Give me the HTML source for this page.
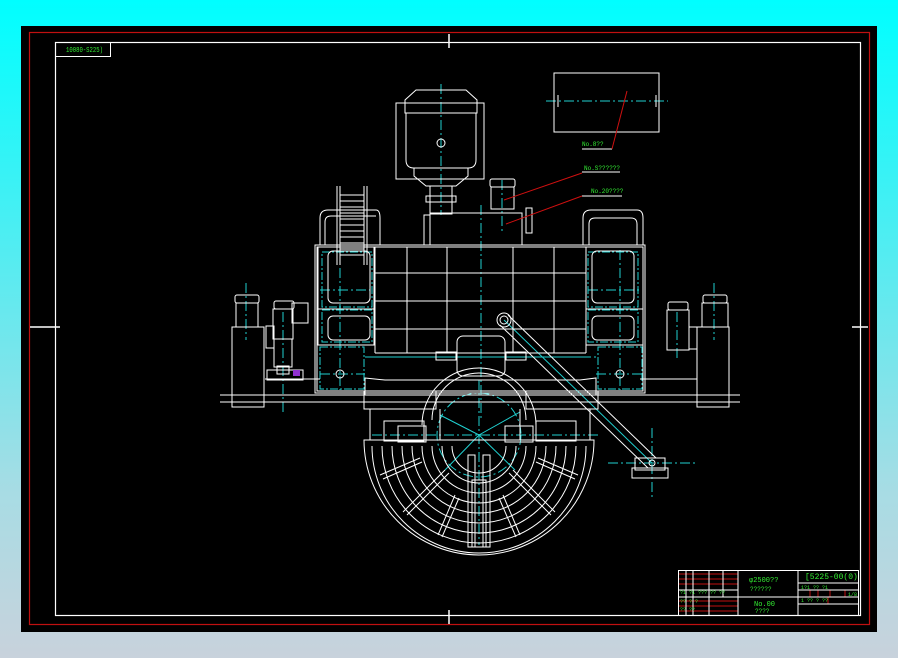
<!DOCTYPE html>
<html><head><meta charset="utf-8"><style>
html,body{margin:0;padding:0;width:898px;height:658px;overflow:hidden;background:linear-gradient(#00ffff 0%,#40f0f4 30%,#a8dce4 75%,#c8d2dc 100%);}
svg{position:absolute;left:0;top:0}
text{font-family:"Liberation Mono",monospace;fill:#33ee33}
</style></head><body>
<svg width="898" height="658" viewBox="0 0 898 658">
<rect x="21" y="26" width="856" height="606" fill="#000"/>
<rect x="29.5" y="32.5" width="840" height="592" fill="none" stroke="#c01010" stroke-width="1.2"/>
<rect x="55.5" y="42.5" width="805" height="573" fill="none" stroke="#fff" stroke-width="1.2"/>
<rect x="55.5" y="42.5" width="55" height="14" fill="none" stroke="#fff"/>
<text x="66" y="52" font-size="7" textLength="37" lengthAdjust="spacingAndGlyphs">10080-S225)</text>
<g stroke="#fff" stroke-width="1.5">
<line x1="449" y1="34" x2="449" y2="48"/><line x1="449" y1="610" x2="449" y2="624"/>
<line x1="30" y1="327" x2="60" y2="327"/><line x1="852" y1="327" x2="868" y2="327"/>
</g>
<g stroke="#20d0d0" stroke-width="1" stroke-dasharray="10,3,2,3" fill="none">
<line x1="441" y1="84" x2="441" y2="215"/>
<line x1="481" y1="205" x2="481" y2="420"/>
<line x1="479" y1="380" x2="479" y2="545"/>
<line x1="502" y1="180" x2="502" y2="232"/>
<line x1="546" y1="101" x2="668" y2="101"/>
<line x1="320" y1="290" x2="370" y2="290"/><line x1="588" y1="290" x2="640" y2="290"/>
<line x1="320" y1="374" x2="365" y2="374"/><line x1="596" y1="374" x2="645" y2="374"/>
<line x1="365" y1="357" x2="596" y2="357"/>
<line x1="246" y1="283" x2="246" y2="340"/><line x1="283" y1="312" x2="283" y2="415"/>
<line x1="714" y1="283" x2="714" y2="340"/><line x1="677" y1="312" x2="677" y2="360"/>
<line x1="372" y1="435" x2="600" y2="435"/>
<line x1="652" y1="428" x2="652" y2="500"/><line x1="608" y1="463" x2="696" y2="463"/>
<line x1="340" y1="250" x2="340" y2="390"/><line x1="620" y1="250" x2="620" y2="390"/>
<circle cx="479" cy="435" r="42"/>
</g>
<g stroke="#20d0d0" stroke-width="1" fill="none">
<rect x="322" y="252" width="50" height="55" stroke-dasharray="8,2,2,2"/>
<rect x="322" y="310" width="50" height="32" stroke-dasharray="8,2,2,2"/>
<rect x="588" y="252" width="50" height="55" stroke-dasharray="8,2,2,2"/>
<rect x="588" y="310" width="50" height="32" stroke-dasharray="8,2,2,2"/>
<rect x="320" y="347" width="44" height="42" stroke-dasharray="8,2,2,2"/>
<rect x="598" y="347" width="44" height="42" stroke-dasharray="8,2,2,2"/>
<line x1="370" y1="357" x2="590" y2="357"/>
<line x1="504" y1="320" x2="652" y2="463"/>
<line x1="479" y1="435" x2="445" y2="470"/><line x1="479" y1="435" x2="515" y2="470"/>
<line x1="479" y1="435" x2="440" y2="415"/><line x1="479" y1="435" x2="520" y2="412"/>
</g>
<g stroke="#fff" stroke-width="1" fill="none">
<rect x="396" y="103" width="88" height="76"/>
<path d="M416 90 H466 L477 100 V113 H405 V100 Z"/>
<path d="M406 113 H476 V160 Q476 168 468 168 H414 Q406 168 406 160 Z"/>
<path d="M414 168 H468 V176 L456 186 H426 L414 176 Z"/>
<rect x="430" y="186" width="22" height="28"/><rect x="426" y="196" width="30" height="6"/>
<circle cx="441" cy="143" r="4"/>
<rect x="430" y="213" width="92" height="32"/><rect x="424" y="215" width="6" height="30"/>
<rect x="490" y="179" width="25" height="8" rx="2"/><rect x="491" y="187" width="23" height="22"/>
<rect x="526" y="208" width="6" height="25"/>
<line x1="337" y1="186" x2="337" y2="265"/><line x1="367" y1="186" x2="367" y2="265"/>
<line x1="340" y1="186" x2="340" y2="265"/><line x1="364" y1="186" x2="364" y2="265"/>
<path d="M340 195H364M340 201H364M340 207H364M340 213H364M340 219H364M340 225H364M340 231H364M340 237H364M340 243H364M340 249H364M340 255H364"/>
<path d="M320 245 V218 Q320 210 328 210 H376 Q380 210 380 218 V245"/>
<path d="M325 245 V222 Q325 216 331 216 H376"/>
<path d="M583 245 V218 Q583 210 591 210 H637 Q643 210 643 218 V245"/>
<path d="M589 245 V224 Q589 218 595 218 H631 Q637 218 637 224 V245"/>
<rect x="315" y="245" width="330" height="148"/>
<rect x="317" y="247" width="326" height="144"/>
<path d="M375 247 V353 M407 247 V353 M447 247 V353 M513 247 V353 M554 247 V353 M586 247 V353"/>
<path d="M375 273 H586 M375 301 H586 M375 329 H586 M375 353 H586"/>
<rect x="318" y="247" width="56" height="62"/><rect x="318" y="309" width="56" height="36"/>
<rect x="586" y="247" width="57" height="62"/><rect x="586" y="309" width="57" height="36"/>
<rect x="328" y="251" width="42" height="52" rx="5"/><rect x="328" y="316" width="42" height="24" rx="5"/>
<rect x="592" y="251" width="42" height="52" rx="5"/><rect x="592" y="316" width="42" height="24" rx="5"/>
<rect x="457" y="336" width="48" height="40" rx="6"/>
<rect x="436" y="352" width="20" height="8"/><rect x="506" y="352" width="20" height="8"/>
<path d="M365 378 L385 380 H580 L596 378 V395 H365 Z"/>
<circle cx="340" cy="374" r="4"/><circle cx="620" cy="374" r="4"/>
<circle cx="504" cy="320" r="7"/><circle cx="504" cy="320" r="4"/>
<line x1="508" y1="315" x2="656" y2="458"/><line x1="500" y1="325" x2="648" y2="468"/>
<rect x="635" y="458" width="30" height="12"/><rect x="632" y="468" width="36" height="10"/>
<circle cx="652" cy="463" r="3"/>
<path d="M220 395 H740 M220 402 H740 M265 379 H320 M640 379 H697"/>
<rect x="235" y="295" width="24" height="8" rx="2"/><rect x="236" y="303" width="22" height="24"/>
<rect x="232" y="327" width="32" height="80"/>
<rect x="274" y="301" width="20" height="8" rx="2"/><rect x="273" y="309" width="20" height="30"/>
<rect x="266" y="326" width="8" height="22"/><rect x="274" y="339" width="18" height="28"/>
<rect x="277" y="366" width="12" height="8"/><rect x="267" y="370" width="36" height="10"/>
<rect x="292" y="303" width="16" height="20"/>
<rect x="703" y="295" width="24" height="8" rx="2"/><rect x="702" y="303" width="26" height="24"/>
<rect x="697" y="327" width="32" height="80"/>
<rect x="668" y="302" width="20" height="8" rx="2"/><rect x="667" y="310" width="22" height="40"/>
<rect x="689" y="327" width="8" height="22"/>
<rect x="364" y="391" width="72" height="18"/><rect x="526" y="391" width="72" height="18"/>
<path d="M370 409 V440 H440 V409 M520 409 V440 H590 V409"/>
<rect x="384" y="421" width="40" height="20"/><rect x="536" y="421" width="40" height="20"/>
<rect x="398" y="426" width="28" height="16"/><rect x="505" y="426" width="28" height="16"/>
<path d="M364 440 A115 115 0 0 0 594 440 Z"/>
<path d="M372 446 A107 107 0 0 0 586 446"/>
<path d="M382 446 A97 97 0 0 0 576 446"/>
<path d="M392 446 A87 87 0 0 0 566 446"/>
<path d="M402 446 A77 77 0 0 0 556 446"/>
<path d="M412 446 A67 67 0 0 0 546 446"/>
<path d="M422 446 A57 57 0 0 0 536 446"/>
<path d="M432 446 A47 47 0 0 0 526 446"/>
<path d="M442 446 A37 37 0 0 0 516 446"/>
<path d="M452 446 A27 27 0 0 0 506 446"/>
<path d="M422 425 A57 57 0 0 1 536 425"/><path d="M432 420 A47 47 0 0 1 526 420"/>
<rect x="468" y="455" width="7" height="92"/><rect x="483" y="455" width="7" height="92"/>
<rect x="472" y="480" width="14" height="67"/>
<path d="M380 475 L420 458 M383 479 L422 462 M403 512 L445 470 M407 515 L449 473 M438 535 L455 495 M442 537 L459 498 M578 475 L538 458 M575 479 L536 462 M555 512 L513 470 M551 515 L509 473 M520 535 L503 495 M516 537 L499 498"/>
<rect x="554" y="73" width="105" height="59"/>
<line x1="558" y1="95" x2="558" y2="107"/><line x1="656" y1="95" x2="656" y2="107"/>
<line x1="582" y1="149" x2="612" y2="149"/><line x1="582" y1="172" x2="620" y2="172"/><line x1="582" y1="196" x2="622" y2="196"/>
</g>
<g stroke="#d01010" stroke-width="1">
<line x1="627" y1="91" x2="612" y2="149"/><line x1="582" y1="173" x2="504" y2="200"/><line x1="582" y1="196" x2="506" y2="224"/>
</g>
<text x="582" y="146" font-size="6">No.8??</text>
<text x="584" y="170" font-size="6">No.S??????</text>
<text x="591" y="193" font-size="6">No.20????</text>
<rect x="293" y="370" width="7" height="6" fill="#9030d0"/>
<g stroke="#c01010" stroke-width="1">
<path d="M678 574 H738 M678 579 H738 M678 584 H738 M678 601 H738 M678 606 H738 M678 611 H738"/>
<path d="M810 590 V597 M818 590 V597 M830 590 V597 M845 590 V597 M828 597 V604"/>
</g>
<g stroke="#fff" stroke-width="1" fill="none">
<rect x="678.5" y="570.5" width="180" height="45"/>
<path d="M686 570V615 M693 570V615 M709 570V615 M723 570V597 M738 570V615 M798 570V615"/>
<path d="M678 590H738 M678 597H738 M738 597H798 M798 583H858 M798 590H858 M798 597H858 M798 604H858"/>
</g>
<text x="749" y="582" font-size="7">φ2500??</text>
<text x="750" y="591" font-size="6">??????</text>
<text x="754" y="606" font-size="7">No.00</text>
<text x="755" y="613" font-size="6">????</text>
<text x="805" y="579" font-size="8">[5225-00(0)</text>
<text x="801" y="589" font-size="5">1?1   ??  ?1</text>
<text x="848" y="596" font-size="5">1/8</text>
<text x="801" y="602" font-size="5">1  ??  ? ??</text>
<text x="680" y="594" font-size="5">?1 ?1 ??? ?? ??</text>
<text x="680" y="603" font-size="5">??      ? ?</text>
<text x="680" y="611" font-size="5">??      ??</text>
</svg>
</body></html>
